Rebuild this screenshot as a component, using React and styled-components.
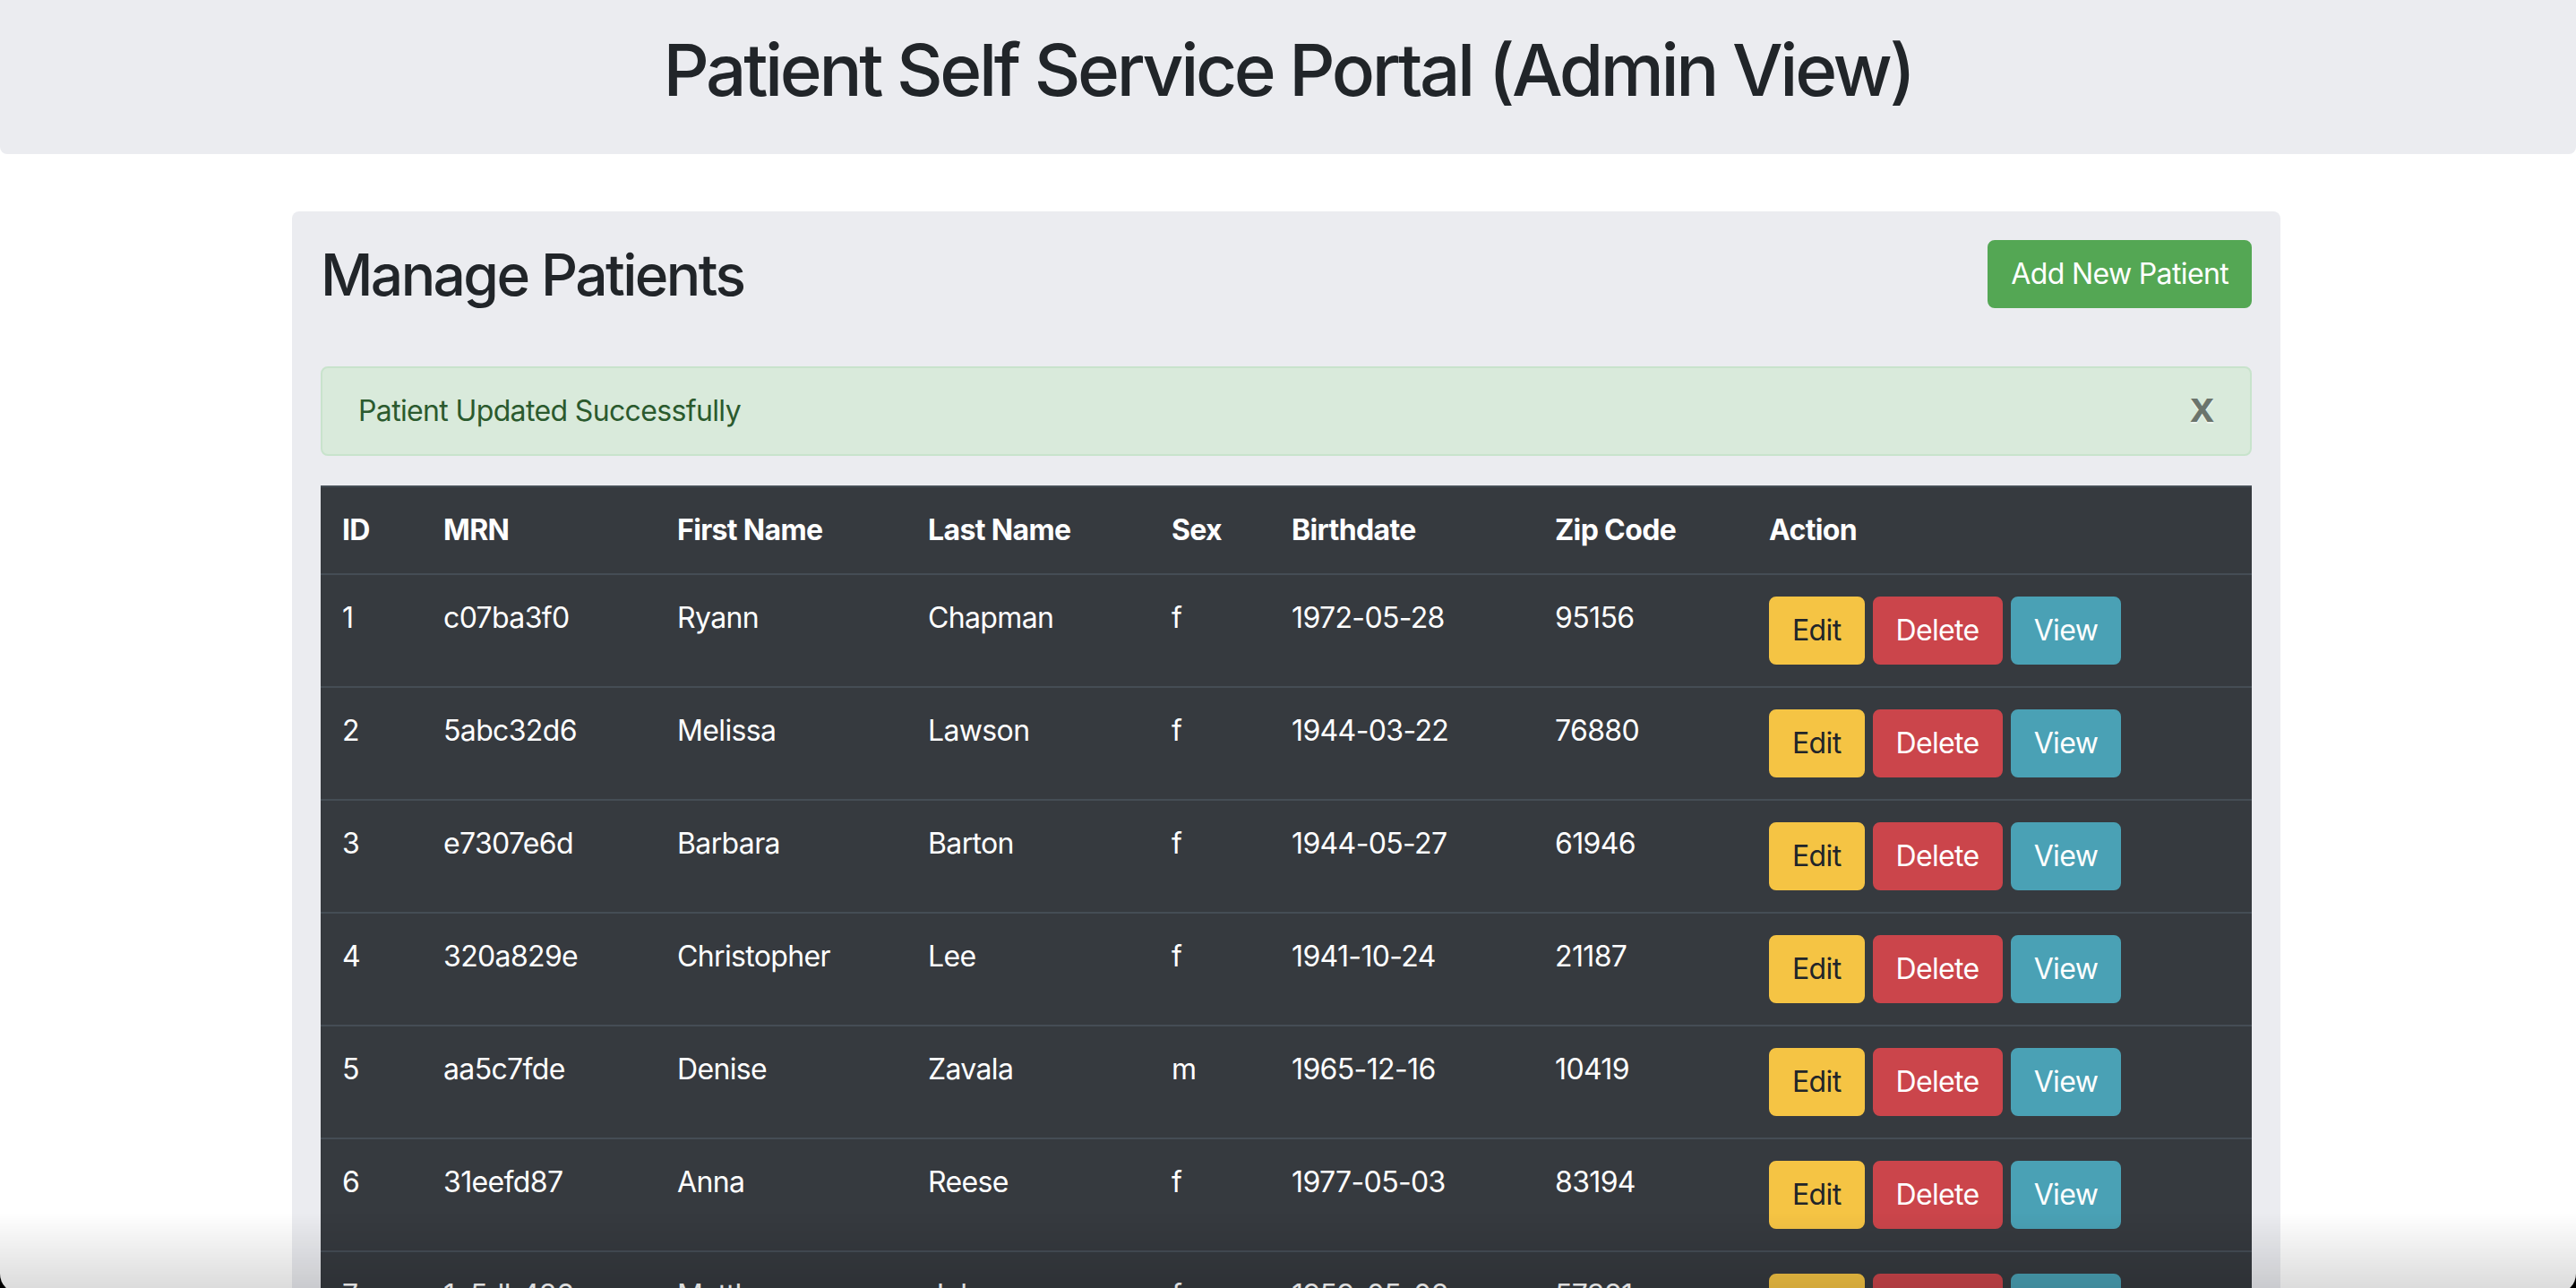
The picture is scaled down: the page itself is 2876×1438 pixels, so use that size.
import styled, { createGlobalStyle } from "styled-components";

const GlobalStyle = createGlobalStyle`
  html, body {
    margin: 0;
    padding: 0;
    overflow: hidden;
    background: #ffffff;
  }

  body {
    font-family: Inter, "Noto Sans", "Liberation Sans", sans-serif;
    font-size: 32px;
    line-height: 48px;
    letter-spacing: -0.02em;
    color: #212529;
  }
`;

const columns = [
  { key: "id", label: "ID", width: 113 },
  { key: "mrn", label: "MRN", width: 261 },
  { key: "firstName", label: "First Name", width: 280 },
  { key: "lastName", label: "Last Name", width: 272 },
  { key: "sex", label: "Sex", width: 134 },
  { key: "birthdate", label: "Birthdate", width: 294 },
  { key: "zip", label: "Zip Code", width: 239 },
  { key: "action", label: "Action", width: 563 }
];

const patients = [
  { id: 1, mrn: "c07ba3f0", firstName: "Ryann", lastName: "Chapman", sex: "f", birthdate: "1972-05-28", zip: "95156" },
  { id: 2, mrn: "5abc32d6", firstName: "Melissa", lastName: "Lawson", sex: "f", birthdate: "1944-03-22", zip: "76880" },
  { id: 3, mrn: "e7307e6d", firstName: "Barbara", lastName: "Barton", sex: "f", birthdate: "1944-05-27", zip: "61946" },
  { id: 4, mrn: "320a829e", firstName: "Christopher", lastName: "Lee", sex: "f", birthdate: "1941-10-24", zip: "21187" },
  { id: 5, mrn: "aa5c7fde", firstName: "Denise", lastName: "Zavala", sex: "m", birthdate: "1965-12-16", zip: "10419" },
  { id: 6, mrn: "31eefd87", firstName: "Anna", lastName: "Reese", sex: "f", birthdate: "1977-05-03", zip: "83194" },
  { id: 7, mrn: "1c5db486", firstName: "Matthew", lastName: "Johnson", sex: "f", birthdate: "1959-05-08", zip: "57381" },
  { id: 8, mrn: "b2d91e07", firstName: "Laura", lastName: "Mendez", sex: "f", birthdate: "1983-09-14", zip: "30512" }
];

const variants = {
  warning: { bg: "#f5c444", color: "#212529" },
  danger: { bg: "#cb454b", color: "#ffffff" },
  info: { bg: "#4aa1b5", color: "#ffffff" },
  success: { bg: "#54a754", color: "#ffffff" }
};

const Header = styled.header`
  background: #ebecf0;
  border-radius: 0 0 8px 8px;
  padding: 30px 0;
  text-align: center;
`;

const PageTitle = styled.h1`
  margin: 0 0 16px;
  font-size: 80px;
  line-height: 96px;
  font-weight: 500;
  letter-spacing: -0.042em;
  color: #212529;
`;

const Card = styled.main`
  width: 2156px;
  margin: 64px 0 0 calc(50% - 1112px);
  padding: 32px;
  background: #ebecf0;
  border-radius: 8px;
`;

const TitleRow = styled.div`
  display: flex;
  justify-content: space-between;
  align-items: flex-start;
`;

const SectionTitle = styled.h2`
  margin: 0;
  font-size: 64px;
  line-height: 77px;
  font-weight: 500;
  letter-spacing: -0.04em;
  color: #212529;
`;

const Button = styled.button`
  display: inline-block;
  padding: 12px 24px;
  border: 2px solid ${(p) => variants[p.$variant].bg};
  border-radius: 8px;
  background: ${(p) => variants[p.$variant].bg};
  color: ${(p) => variants[p.$variant].color};
  font-family: inherit;
  font-size: 32px;
  line-height: 48px;
  font-weight: 400;
  letter-spacing: -0.02em;
  cursor: pointer;
`;

const Alert = styled.div`
  position: relative;
  margin: 64px 0 33px;
  padding: 24px 40px;
  border: 2px solid #c8e3cc;
  border-radius: 8px;
  background: #d9eadb;
  color: #2b5a2e;
`;

const CloseButton = styled.button`
  position: absolute;
  top: 0;
  right: 0;
  padding: 20px 40px;
  border: 0;
  background: transparent;
  font-family: "Liberation Sans", Arial, sans-serif;
  font-size: 48px;
  line-height: 48px;
  font-weight: 700;
  color: #000;
  opacity: 0.5;
  text-shadow: 0 2px 0 #fff;
  cursor: pointer;
`;

const Table = styled.table`
  width: 100%;
  table-layout: fixed;
  border-collapse: collapse;
  background: #363a3f;
  color: #ffffff;
`;

const Col = styled.col`
  width: ${(p) => p.$width}px;
`;

const HeadCell = styled.th`
  padding: 24px;
  border-top: 2px solid #454d55;
  border-bottom: 2px solid #454d55;
  text-align: left;
  vertical-align: bottom;
  font-weight: 700;
`;

const Cell = styled.td`
  padding: 24px;
  border-top: 2px solid #454d55;
  vertical-align: top;
  white-space: nowrap;
`;

const Actions = styled.div`
  display: flex;
  gap: 9px;
`;

const ScreenEdge = styled.div`
  position: fixed;
  left: 0;
  right: 0;
  top: 0;
  height: calc(100% + 6px);
  pointer-events: none;
  border-radius: 0 0 22px 22px;
  box-shadow: 0 0 0 40px #000;
  background: linear-gradient(to bottom, rgba(0, 0, 0, 0) calc(100% - 90px), rgba(0, 0, 0, 0.15));
`;

const App = () => {
  return (
    <>
      <GlobalStyle />
      <Header>
        <PageTitle>Patient Self Service Portal (Admin View)</PageTitle>
      </Header>

      <Card>
        <TitleRow>
          <SectionTitle>Manage Patients</SectionTitle>
          <Button $variant="success">Add New Patient</Button>
        </TitleRow>

        <Alert>
          Patient Updated Successfully
          <CloseButton aria-label="Close">x</CloseButton>
        </Alert>

        <Table>
          <colgroup>
            {columns.map((col) => (
              <Col key={col.key} $width={col.width} />
            ))}
          </colgroup>
          <thead>
            <tr>
              {columns.map((col) => (
                <HeadCell key={col.key}>{col.label}</HeadCell>
              ))}
            </tr>
          </thead>
          <tbody>
            {patients.map((patient) => (
              <tr key={patient.id}>
                <Cell>{patient.id}</Cell>
                <Cell>{patient.mrn}</Cell>
                <Cell>{patient.firstName}</Cell>
                <Cell>{patient.lastName}</Cell>
                <Cell>{patient.sex}</Cell>
                <Cell>{patient.birthdate}</Cell>
                <Cell>{patient.zip}</Cell>
                <Cell>
                  <Actions>
                    <Button $variant="warning">Edit</Button>
                    <Button $variant="danger">Delete</Button>
                    <Button $variant="info">View</Button>
                  </Actions>
                </Cell>
              </tr>
            ))}
          </tbody>
        </Table>
      </Card>

      <ScreenEdge />
    </>
  );
};

export default App;
